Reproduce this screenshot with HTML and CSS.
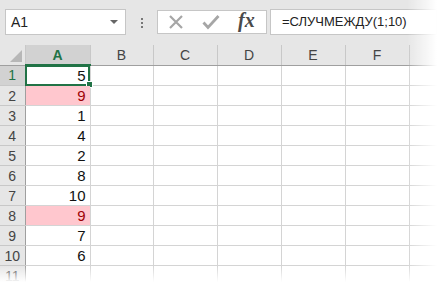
FILE: index.html
```html
<!DOCTYPE html>
<html lang="ru">
<head>
  <meta charset="UTF-8">
  <title>Excel - СЛУЧМЕЖДУ</title>
  <link rel="stylesheet" href="styles.css">
</head>
<body>
  <div class="sheet">
    <div class="toolbar">
      <div class="namebox">
        <span>A1</span>
        <svg class="caret" width="8" height="5" viewBox="0 0 8 5"><path d="M0 0h8L4 4z" fill="#666"/></svg>
      </div>
      <div class="dots"><i></i><i></i><i></i></div>
      <div class="fbuttons">
        <svg width="16" height="16" viewBox="0 0 16 16"><path d="M2 2l12 12M14 2L2 14" stroke="#a6a6a6" stroke-width="2.2"/></svg>
        <svg width="18" height="16" viewBox="0 0 18 16"><path d="M1.5 8.5l4.5 5L16.5 2" stroke="#a6a6a6" stroke-width="2.8" fill="none"/></svg>
        <span class="fx">fx</span>
      </div>
      <div class="formula">=СЛУЧМЕЖДУ(1;10)</div>
    </div>

    <table class="grid">
      <colgroup>
        <col class="c-row"><col class="c-a"><col class="c-b"><col class="c-n"><col class="c-n"><col class="c-n"><col class="c-n"><col>
      </colgroup>
      <thead>
        <tr>
          <th class="corner"><span class="tri"></span></th>
          <th class="sel">A</th><th>B</th><th>C</th><th>D</th><th>E</th><th>F</th><th></th>
        </tr>
      </thead>
      <tbody id="rows"></tbody>
    </table>
    <div class="fade-right"></div>
    <div class="fade-bottom"></div>
  </div>
  <script>
    const values = [5, 9, 1, 4, 2, 8, 10, 9, 7, 6, ''];
    const body = document.getElementById('rows');
    values.forEach((v, i) => {
      const tr = document.createElement('tr');
      const bad = v === 9;
      tr.innerHTML =
        `<th class="${i === 0 ? 'sel' : ''}">${i + 1}</th>` +
        `<td class="num${bad ? ' bad' : ''}${i === 0 ? ' active' : ''}">${v}${i === 0 ? '<span class="handle"></span>' : ''}</td>` +
        '<td></td><td></td><td></td><td></td><td></td><td></td>';
      body.appendChild(tr);
    });
  </script>
</body>
</html>
```

FILE: styles.css
```css
body {
  margin: 0;
  background: #fff;
  font-family: 'Liberation Sans', Arial, sans-serif;
}
.sheet {
  position: relative;
  width: 437px;
  height: 282px;
  overflow: hidden;
  background: #fff;
}
.toolbar {
  display: flex;
  align-items: center;
  height: 45px;
  background: #e6e6e6;
  padding: 0 0 0 5px;
}
.namebox {
  display: flex;
  align-items: center;
  justify-content: space-between;
  width: 107px;
  height: 24px;
  background: #fff;
  border: 1px solid #c6c6c6;
  padding: 0 7px 0 5px;
  margin-top: -1px;
  font-size: 14px;
  color: #222;
}
.dots {
  display: flex;
  flex-direction: column;
  gap: 2px;
  width: 31px;
  align-items: center;
}
.dots i {
  display: block;
  width: 2px;
  height: 2px;
  background: #777;
}
.fbuttons {
  display: flex;
  align-items: center;
  gap: 18px;
  width: 110px;
  height: 24px;
  background: #fff;
  border: 1px solid #c6c6c6;
  padding-left: 10px;
  box-sizing: border-box;
  margin-top: -1px;
}
.fx {
  font-family: 'Liberation Serif', 'Times New Roman', serif;
  font-style: italic;
  font-weight: bold;
  font-size: 20px;
  color: #4a4a4a;
  margin-top: -3px;
}
.formula {
  flex: 1;
  height: 24px;
  line-height: 24px;
  margin-left: 3px;
  margin-top: -1px;
  background: #fff;
  border: 1px solid #c6c6c6;
  padding-left: 11px;
  font-size: 13px;
  color: #222;
}
.grid {
  border-collapse: collapse;
  table-layout: fixed;
  width: 440px;
}
.c-row { width: 25px; }
.c-a { width: 65px; }
.c-b { width: 63px; }
.c-n { width: 64px; }
.grid thead th {
  height: 19px;
  background: #e6e6e6;
  border-right: 1px solid #c8c8c8;
  border-bottom: 1px solid #9f9f9f;
  font-weight: normal;
  font-size: 14px;
  color: #444;
  padding: 0;
}
.grid thead th.sel {
  background: #d2d2d2;
  color: #217346;
  font-weight: bold;
  border-bottom: 2px solid #217346;
}
.grid .corner {
  position: relative;
}
.tri {
  position: absolute;
  right: 3px;
  bottom: 3px;
  width: 0;
  height: 0;
  border-left: 12px solid transparent;
  border-bottom: 12px solid #b7b7b7;
}
.grid tbody th {
  height: 19px;
  background: #e6e6e6;
  border-right: 1px solid #9f9f9f;
  border-bottom: 1px solid #c8c8c8;
  font-weight: normal;
  font-size: 14px;
  color: #444;
  padding: 0;
}
.grid tbody th.sel {
  background: #d2d2d2;
  color: #217346;
}
.grid td {
  height: 19px;
  border-right: 1px solid #d4d4d4;
  border-bottom: 1px solid #d4d4d4;
  padding: 0 4px;
  font-size: 15px;
  color: #111;
}
.grid td.num {
  text-align: right;
  position: relative;
}
.grid td.bad {
  background: #ffc7ce;
  color: #9c0006;
}
.grid td.active {
  outline: 2px solid #217346;
  outline-offset: -2px;
}
.handle {
  position: absolute;
  right: -3px;
  bottom: -3px;
  width: 5px;
  height: 5px;
  background: #217346;
  border: 1px solid #fff;
}
.fade-right {
  position: absolute;
  top: 0;
  right: 0;
  width: 30px;
  height: 282px;
  background: linear-gradient(to right, rgba(255,255,255,0), #fff);
}
.fade-bottom {
  position: absolute;
  left: 0;
  bottom: 0;
  width: 437px;
  height: 16px;
  background: linear-gradient(to bottom, rgba(255,255,255,0), #fff);
}
```
